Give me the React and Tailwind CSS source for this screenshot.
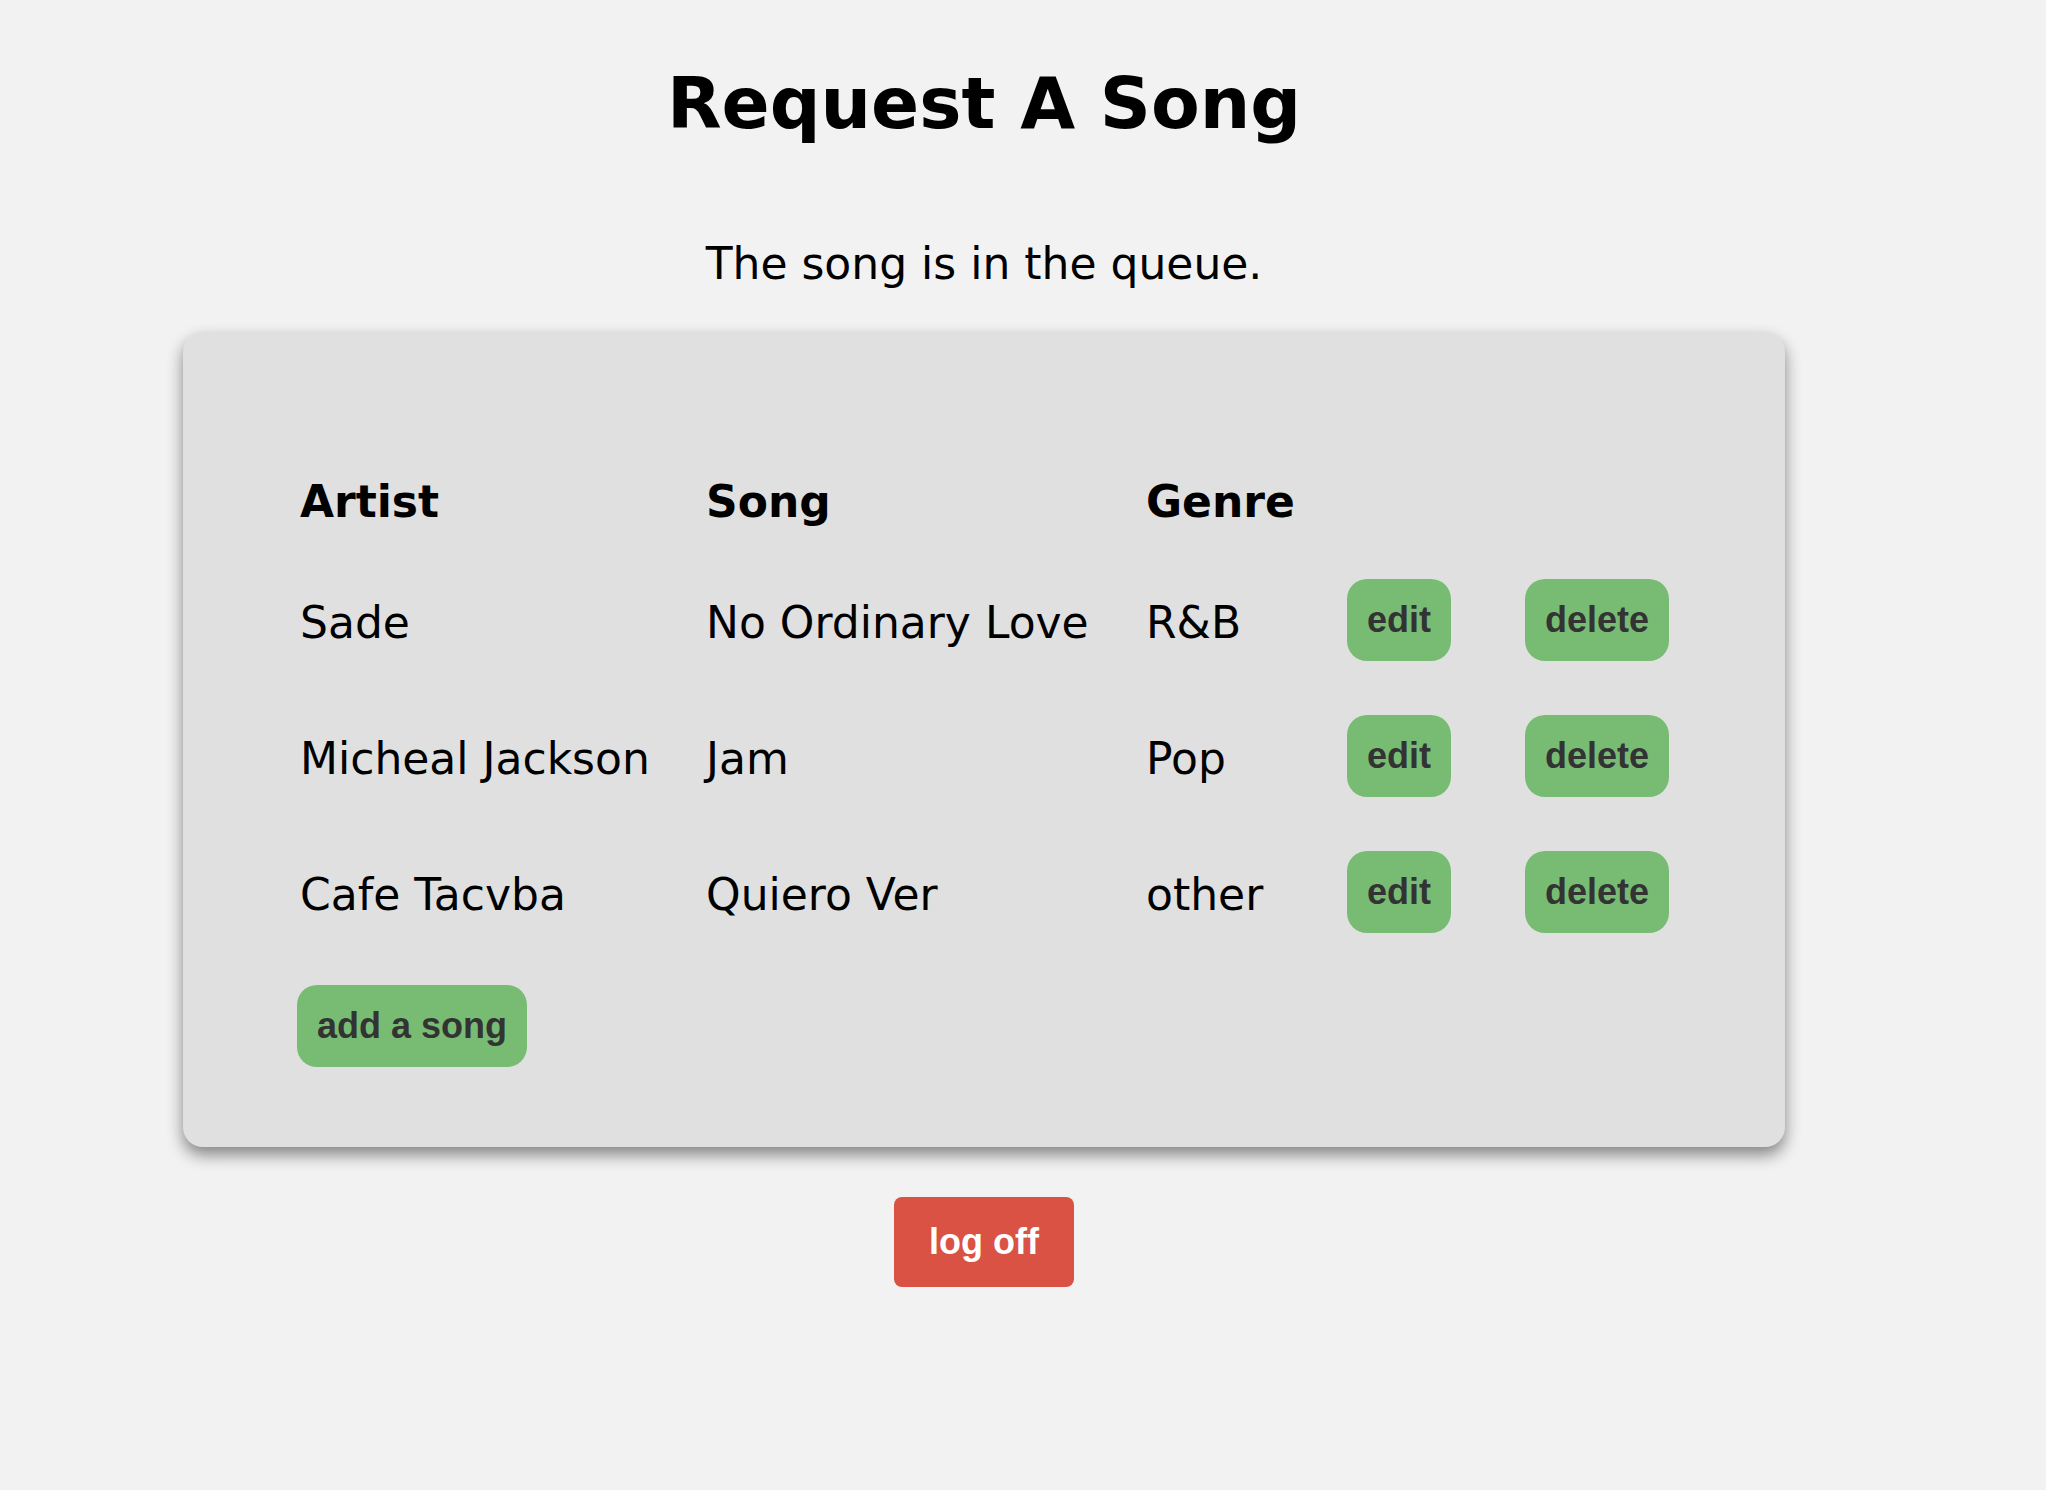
const songs = [
  { artist: 'Sade', song: 'No Ordinary Love', genre: 'R&B' },
  { artist: 'Micheal Jackson', song: 'Jam', genre: 'Pop' },
  { artist: 'Cafe Tacvba', song: 'Quiero Ver', genre: 'other' },
]

function GreenButton({ children, className = '' }) {
  return (
    <button
      type="button"
      className={`rounded-[20px] bg-[#78bc74] px-5 py-5 font-['Liberation_Sans',Arial,sans-serif] text-[36px] font-bold leading-[42px] text-[#333] ${className}`}
    >
      {children}
    </button>
  )
}

export default function App() {
  return (
    <div className="min-h-[1490px] bg-[#f2f2f2] font-['DejaVu_Sans',Verdana,sans-serif] text-black">
      <div className="flex w-[1968px] flex-col items-center pt-[62px]">
        <h1 className="text-[71px] font-bold leading-[83px]">Request A Song</h1>
        <p className="mt-[93px] text-[44px] leading-[51px]">The song is in the queue.</p>

        <div className="mt-[43px] w-[1602px] self-start ml-[183px] rounded-[20px] bg-[#e0e0e0] pb-[80px] pl-[117px] pt-[144px] shadow-[0_8px_16px_rgba(0,0,0,0.45)]">
          <div className="grid grid-cols-[406px_440px_201px_178px_auto] text-[44px] font-bold leading-[51px]">
            <span>Artist</span>
            <span>Song</span>
            <span>Genre</span>
          </div>

          <div className="mt-[52px] flex flex-col gap-[54px]">
            {songs.map((s) => (
              <div
                key={s.artist}
                className="grid grid-cols-[406px_440px_201px_178px_auto] items-start text-[44px] leading-[51px]"
              >
                <span className="pt-[18px]">{s.artist}</span>
                <span className="pt-[18px]">{s.song}</span>
                <span className="pt-[18px]">{s.genre}</span>
                <div>
                  <GreenButton>edit</GreenButton>
                </div>
                <div>
                  <GreenButton>delete</GreenButton>
                </div>
              </div>
            ))}
          </div>

          <div className="mt-[52px]">
            <GreenButton className="-ml-[3px]">add a song</GreenButton>
          </div>
        </div>

        <button
          type="button"
          className="mt-[50px] rounded-[8px] bg-[#d95243] px-[35px] py-[24px] font-['Liberation_Sans',Arial,sans-serif] text-[36px] font-bold leading-[42px] text-white"
        >
          log off
        </button>
      </div>
    </div>
  )
}
